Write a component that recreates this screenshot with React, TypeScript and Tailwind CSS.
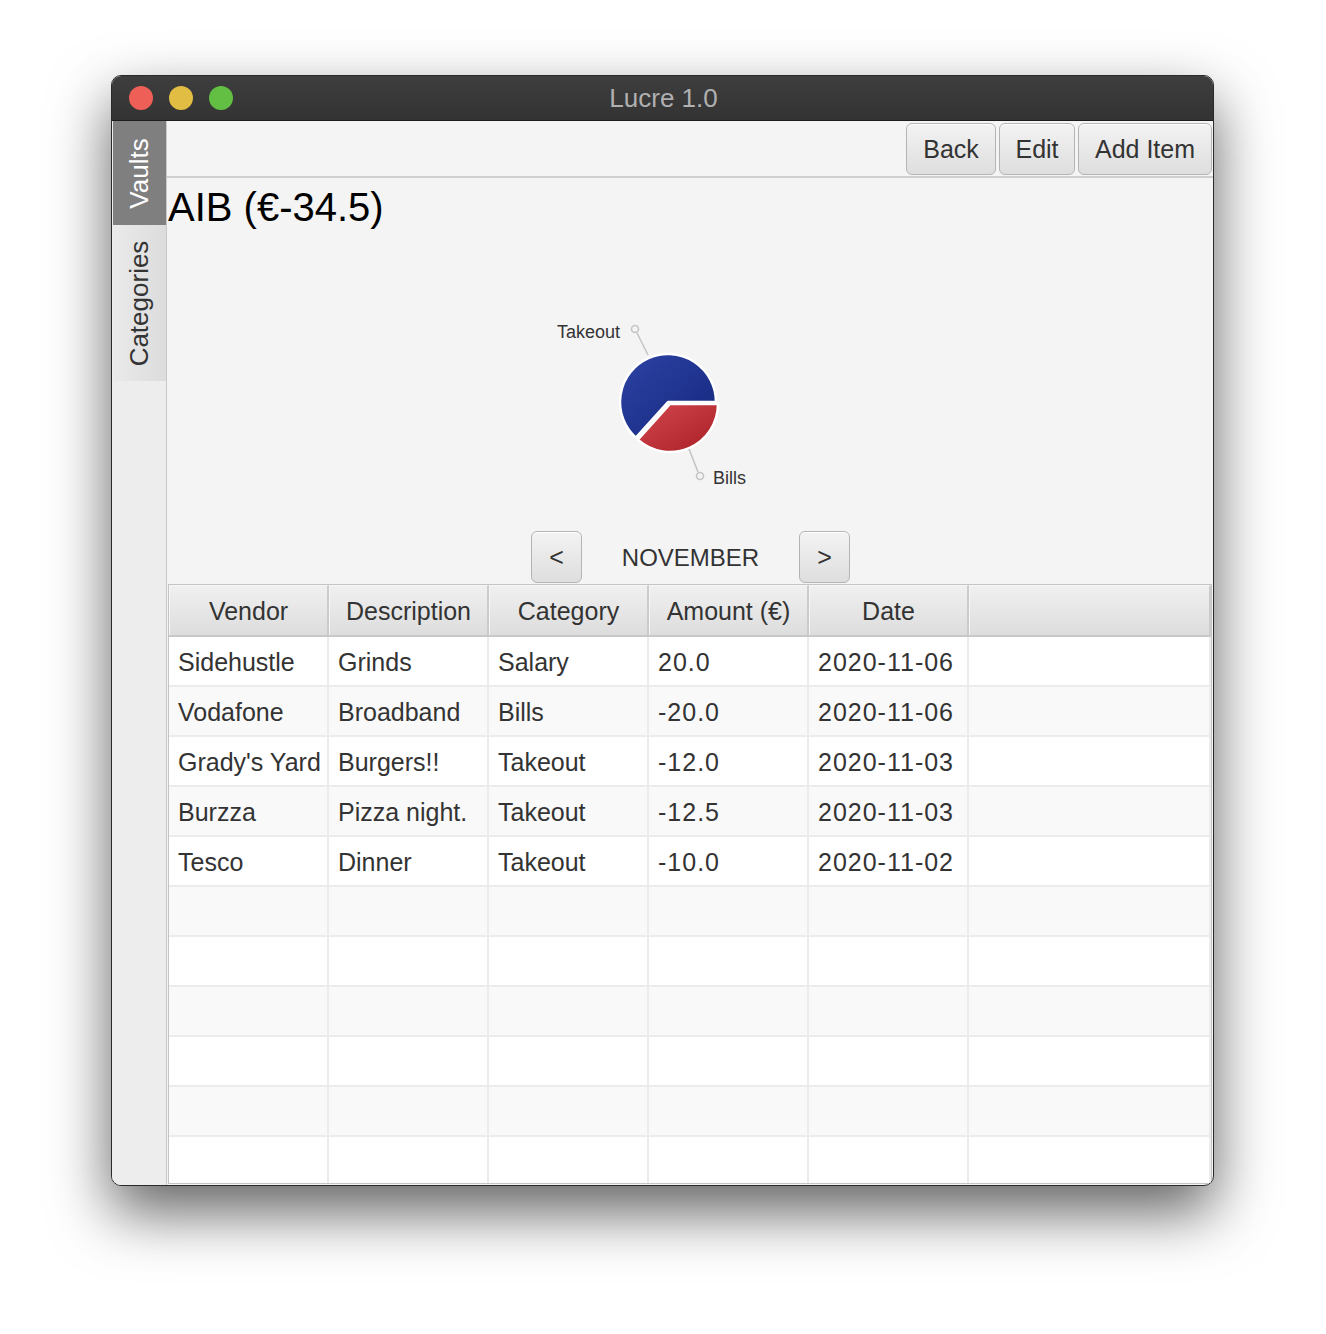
import React from "react";

const rows: string[][] = [
  ["Sidehustle", "Grinds", "Salary", "20.0", "2020-11-06"],
  ["Vodafone", "Broadband", "Bills", "-20.0", "2020-11-06"],
  ["Grady's Yard", "Burgers!!", "Takeout", "-12.0", "2020-11-03"],
  ["Burzza", "Pizza night.", "Takeout", "-12.5", "2020-11-03"],
  ["Tesco", "Dinner", "Takeout", "-10.0", "2020-11-02"],
  ["", "", "", "", ""],
  ["", "", "", "", ""],
  ["", "", "", "", ""],
  ["", "", "", "", ""],
  ["", "", "", "", ""],
  ["", "", "", "", ""],
];

const headers = ["Vendor", "Description", "Category", "Amount (€)", "Date"];

function Btn({ children, w }: { children: React.ReactNode; w: string }) {
  return (
    <div
      className={`${w} h-[52px] flex items-center justify-center pt-[2px] rounded-[6px] border border-[#b4b4b4] bg-gradient-to-b from-[#f3f3f3] to-[#dedede] text-[25px] text-[#333] shadow-[inset_0_1px_0_#ffffff]`}
    >
      {children}
    </div>
  );
}

function Pie() {
  const cx = 501;
  const cy = 163;
  const r = 48;
  const a = (132 * Math.PI) / 180;
  const ex = cx + r * Math.cos(a);
  const ey = cy + r * Math.sin(a);
  return (
    <svg width="1045" height="290" viewBox="0 0 1045 290" className="block">
      <defs>
        <linearGradient id="blueG" x1="0" y1="0" x2="1" y2="1">
          <stop offset="0" stopColor="#2d43a3" />
          <stop offset="1" stopColor="#14277f" />
        </linearGradient>
        <linearGradient id="redG" x1="0" y1="0" x2="1" y2="1">
          <stop offset="0" stopColor="#d3464d" />
          <stop offset="1" stopColor="#a91f26" />
        </linearGradient>
      </defs>
      <path
        d={`M ${cx} ${cy} L ${ex} ${ey} A ${r} ${r} 0 1 1 ${cx + r} ${cy} Z`}
        fill="url(#blueG)"
        stroke="#ffffff"
        strokeWidth="2.5"
        strokeLinejoin="round"
      />
      <path
        d={`M ${cx + 2} ${cy + 2} L ${cx + r + 2} ${cy + 2} A ${r} ${r} 0 0 1 ${ex + 2} ${ey + 2} Z`}
        fill="url(#redG)"
        stroke="#ffffff"
        strokeWidth="2.5"
        strokeLinejoin="round"
      />
      <circle cx={468} cy={90} r={3.5} fill="none" stroke="#c4c4c4" strokeWidth="1.6" />
      <line x1={470} y1={94} x2={481} y2={116} stroke="#c4c4c4" strokeWidth="1.6" />
      <text x={390} y={99} fontSize="18" fill="#333" fontFamily="Liberation Sans, Arial, sans-serif">
        Takeout
      </text>
      <circle cx={533} cy={237} r={3.5} fill="none" stroke="#c4c4c4" strokeWidth="1.6" />
      <line x1={522} y1={210} x2={531} y2={233} stroke="#c4c4c4" strokeWidth="1.6" />
      <text x={546} y={245} fontSize="18" fill="#333" fontFamily="Liberation Sans, Arial, sans-serif">
        Bills
      </text>
    </svg>
  );
}

export default function App() {
  return (
    <div
      className="w-[1326px] h-[1334px] bg-white pl-[111px] pt-[75px]"
      style={{ fontFamily: '"Liberation Sans", Arial, sans-serif' }}
    >
      <div className="w-[1103px] h-[1111px] rounded-[10px] border border-[#2a2a2a] overflow-hidden flex flex-col bg-[#f4f4f4] shadow-[0_26px_60px_rgba(0,0,0,0.62)]">
        {/* Title bar */}
        <div className="h-[45px] shrink-0 relative flex items-center bg-gradient-to-b from-[#3e3e3e] to-[#333333] border-b border-[#1c1c1c]">
          <div className="flex items-center gap-[16px] pl-[17px]">
            <div className="w-[24px] h-[24px] rounded-full bg-[#ee5f57]" />
            <div className="w-[24px] h-[24px] rounded-full bg-[#e1bd44]" />
            <div className="w-[24px] h-[24px] rounded-full bg-[#63bf43]" />
          </div>
          <div className="absolute inset-0 flex items-center justify-center text-[26px] text-[#b0b0b0] pl-[2px] pt-[1px]">
            Lucre 1.0
          </div>
        </div>
        {/* Body */}
        <div className="flex flex-1 min-h-0">
          {/* Side tabs */}
          <div className="w-[55px] shrink-0 bg-[#ededed] border-r border-[#c9c9c9] pl-[1px] flex flex-col">
            <div className="h-[104px] bg-[#7f7f7f] flex items-center justify-center">
              <div className="-rotate-90 text-[26px] text-white whitespace-nowrap">Vaults</div>
            </div>
            <div className="h-[156px] bg-gradient-to-r from-[#eaeaea] to-[#dcdcdc] flex items-center justify-center">
              <div className="-rotate-90 text-[26px] text-[#333] whitespace-nowrap">Categories</div>
            </div>
          </div>
          {/* Content */}
          <div className="flex-1 flex flex-col min-w-0">
            <div className="h-[57px] shrink-0 border-b-2 border-[#cfcfcf] flex justify-end items-start pt-[2px] pr-[1px] gap-[3px]">
              <Btn w="w-[90px]">Back</Btn>
              <Btn w="w-[76px]">Edit</Btn>
              <Btn w="w-[134px]">Add Item</Btn>
            </div>
            <div className="h-[61px] shrink-0 pl-[1px] text-[40px] leading-[58px] text-black">
              AIB (€-34.5)
            </div>
            <div className="h-[290px] shrink-0">
              <Pie />
            </div>
            <div className="h-[55px] shrink-0 flex items-start justify-center pl-[1px] pt-[2px]">
              <div className="flex items-center">
                <Btn w="w-[51px]">&lt;</Btn>
                <div className="w-[217px] h-[52px] flex items-center justify-center pt-[2px] text-[24px] text-[#333]">
                  NOVEMBER
                </div>
                <Btn w="w-[51px]">&gt;</Btn>
              </div>
            </div>
            {/* Table */}
            <div className="ml-[1px] mr-[1px] h-[600px] border border-[#c4c4c4] bg-white overflow-hidden">
              <div className="grid grid-cols-[160px_160px_160px_160px_160px_1fr] h-[52px] border-b-2 border-[#c8c8c8]">
                {[...headers, ""].map((h, i) => (
                  <div
                    key={i}
                    className="flex items-center justify-center pt-[3px] border-r-2 border-[#cbcbcb] border-l border-l-[#f6f6f6] border-t border-t-[#f6f6f6] bg-gradient-to-b from-[#f0f0f0] to-[#dddddd] text-[25px] text-[#333]"
                  >
                    {h}
                  </div>
                ))}
              </div>
              {rows.map((r, ri) => (
                <div
                  key={ri}
                  className={`grid grid-cols-[160px_160px_160px_160px_160px_1fr] h-[50px] border-b-2 border-[#ececec] ${
                    ri % 2 === 0 ? "bg-white" : "bg-[#f9f9f9]"
                  }`}
                >
                  {[...r, ""].map((c, ci) => (
                    <div
                      key={ci}
                      className={`flex items-center pl-[9px] pt-[3px] border-r-2 border-[#ececec] text-[25px] text-[#333] whitespace-nowrap overflow-hidden ${
                        ci === 3 || ci === 4 ? "tracking-[1px]" : ""
                      }`}
                    >
                      {c}
                    </div>
                  ))}
                </div>
              ))}
            </div>
          </div>
        </div>
      </div>
    </div>
  );
}
